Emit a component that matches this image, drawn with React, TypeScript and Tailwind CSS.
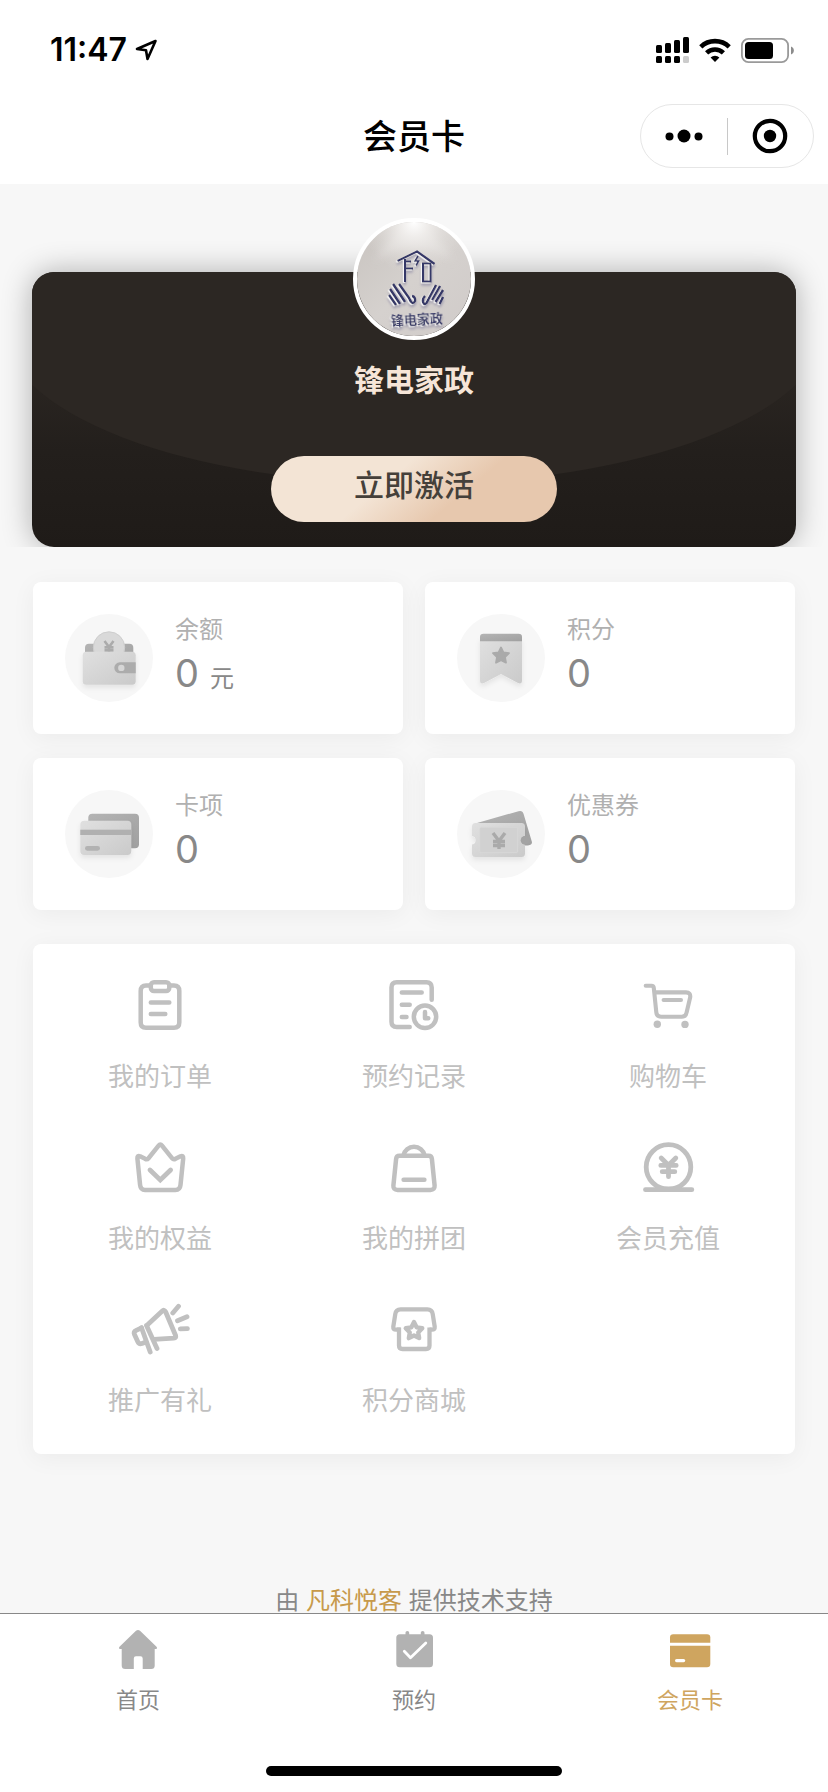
import React from "react";

type IconProps = { className?: string };

function YenStrokes({ x, y, s, color }: { x: number; y: number; s: number; color: string }) {
  return (
    <g transform={`translate(${x} ${y}) scale(${s})`} stroke={color} strokeWidth="3.4" fill="none">
      <path d="M-6 -8 L0 0 L6 -8 M0 -1 V8 M-6 0.5 H6 M-6 4.5 H6" />
    </g>
  );
}

/* ---------- status bar ---------- */

function LocationArrow() {
  return (
    <svg viewBox="0 0 24 24" className="size-6" fill="none" stroke="black" strokeWidth="2.6" strokeLinejoin="round" aria-hidden="true">
      <path d="M21.5 3 L3 11 L12 12.200 L13.500 21 Z" />
    </svg>
  );
}

function Signal() {
  return (
    <svg viewBox="0 0 33 26" className="h-[26px] w-[33px]" aria-hidden="true">
      <rect x="0" y="8" width="6" height="8" rx="1.5" />
      <rect x="9" y="6" width="6" height="10" rx="1.5" />
      <rect x="18" y="3" width="6" height="13" rx="1.5" />
      <rect x="27" y="0" width="6" height="16" rx="1.5" />
      <rect x="0" y="19" width="6" height="7" rx="1.5" />
      <rect x="9" y="19" width="6" height="7" rx="1.5" />
      <rect x="18" y="19" width="6" height="7" rx="1.5" />
      <rect x="27" y="19" width="6" height="7" rx="1.5" fill="#cccccc" />
    </svg>
  );
}

function Wifi() {
  return (
    <svg viewBox="0 0 32 24" className="h-6 w-8" fill="none" stroke="black" strokeWidth="4.6" aria-hidden="true">
      <path d="M1.800 8.800 A20.500 20.500 0 0 1 30.200 8.800" />
      <path d="M7.600 14.900 A12.200 12.200 0 0 1 24.400 14.900" />
      <path d="M16 24 L11.600 19.500 A6.400 6.400 0 0 1 20.400 19.500 Z" fill="black" stroke="none" />
    </svg>
  );
}

function Battery() {
  return (
    <svg viewBox="0 0 53 25" className="h-[25px] w-[53px]" aria-hidden="true">
      <rect x="0.900" y="0.900" width="46.200" height="23.200" rx="6.500" fill="none" stroke="#9a9a9a" strokeWidth="1.800" />
      <rect x="4" y="4" width="28" height="17" rx="3.500" />
      <path d="M50 8.500 C53.800 9.800 53.800 15.200 50 16.500 Z" fill="#8c8c8c" />
    </svg>
  );
}

/* ---------- avatar ---------- */

function AvatarPicture() {
  const ink = "#343768";
  return (
    <svg viewBox="0 0 114 114" className="size-full" role="img" aria-label="锋电家政">
      <defs>
        <linearGradient id="wall" x1="0" y1="0" x2="1" y2="1">
          <stop offset="0" stopColor="#c8c3bf" />
          <stop offset="0.500" stopColor="#d5d1ce" />
          <stop offset="1" stopColor="#d0cbc9" />
        </linearGradient>
        <radialGradient id="lamp" cx="0.500" cy="0" r="0.450">
          <stop offset="0" stopColor="#ffffff" />
          <stop offset="0.300" stopColor="#f3f1ef" stopOpacity="0.800" />
          <stop offset="1" stopColor="#e5e2df" stopOpacity="0" />
        </radialGradient>
        <filter id="haze" x="-20%" y="-20%" width="140%" height="140%">
          <feGaussianBlur stdDeviation="4" />
        </filter>
        <filter id="relief" x="-20%" y="-20%" width="140%" height="140%">
          <feDropShadow dx="-1.200" dy="0.800" stdDeviation="0.300" floodColor="#ffffff" floodOpacity="0.850" />
          <feDropShadow dx="0.300" dy="2.500" stdDeviation="1" floodColor="#8e8aa5" floodOpacity="0.700" />
        </filter>
      </defs>
      <rect width="114" height="114" fill="url(#wall)" />
      <path d="M48 0 L16 40 Q57 10 98 40 L66 0 Z" fill="#ebe8e6" opacity="0.500" filter="url(#haze)" />
      <rect width="114" height="114" fill="url(#lamp)" />
      <g fill="none" stroke={ink} filter="url(#relief)">
        <path d="M40.500 39 L60 29.500 L77.500 42" strokeWidth="2.200" />
        <path d="M48 37 V60 M48 39.500 H54 M48 46.500 H56" strokeWidth="2" />
        <rect x="66" y="41.500" width="7.500" height="18" strokeWidth="2" />
        <path d="M61 34 L58 39 H61.500 L59 43.500" strokeWidth="1.600" />
        <g strokeWidth="2.400">
          <path d="M32 73 L39 83 M33 67 L43 82 M36 62 L48 80 M42 62 L52 76 Q55 84 58 79 Q58.500 75 55 74" />
          <path d="M86 75 L82.500 82 M86 68 L78.500 80 M83 64 L75 78 M79 63 L71 78 Q68 85 66 80 Q65 77 68 74" />
        </g>
      </g>
      <text
        x="60"
        y="102"
        textAnchor="middle"
        transform="rotate(-3 60 102)"
        fontSize="13"
        fontWeight="700"
        fill={ink}
        filter="url(#relief)"
      >
        锋电家政
      </text>
    </svg>
  );
}

/* ---------- summary icons ---------- */

function SoftDefs({ id }: { id: string }) {
  return (
    <defs>
      <linearGradient id={`${id}-light`} x1="0" y1="0" x2="1" y2="1">
        <stop offset="0" stopColor="#e0e0e0" />
        <stop offset="1" stopColor="#cacaca" />
      </linearGradient>
      <linearGradient id={`${id}-dark`} x1="0" y1="0" x2="1" y2="1">
        <stop offset="0" stopColor="#b4b4b4" />
        <stop offset="1" stopColor="#a0a0a0" />
      </linearGradient>
      <filter id={`${id}-shadow`} x="-30%" y="-30%" width="160%" height="170%">
        <feDropShadow dx="0" dy="3" stdDeviation="2.500" floodColor="#000000" floodOpacity="0.080" />
      </filter>
    </defs>
  );
}

function WalletIcon() {
  return (
    <svg viewBox="0 0 88 88" className="size-full" aria-hidden="true">
      <SoftDefs id="wallet" />
      <rect x="20" y="29.700" width="48.300" height="20" rx="4" fill="url(#wallet-dark)" />
      <circle cx="44" cy="33.500" r="15.700" fill="#d9d9d9" stroke="#cecece" strokeWidth="1" />
      <YenStrokes x={44} y={33} s={0.75} color="#ababab" />
      <rect x="17.700" y="37.700" width="53" height="33" rx="3.500" fill="url(#wallet-light)" filter="url(#wallet-shadow)" />
      <path d="M70.700 48.300 H54.800 A5.500 5.500 0 0 0 54.800 59.300 H70.700 Z" fill="#acacac" />
      <circle cx="56.300" cy="53.900" r="3.200" fill="#d6d6d6" />
    </svg>
  );
}

function RibbonIcon() {
  return (
    <svg viewBox="0 0 88 88" className="size-full" aria-hidden="true">
      <SoftDefs id="ribbon" />
      <path
        d="M23 24 H65 V66.500 Q65 70.500 61 69 L44 60 L27 69 Q23 70.500 23 66.500 Z"
        fill="url(#ribbon-light)"
        filter="url(#ribbon-shadow)"
      />
      <path d="M23 27.300 V23 Q23 19.700 26.500 19.700 H61.500 Q65 19.700 65 23 V27.300 Z" fill="url(#ribbon-dark)" />
      <path
        d="M44 33.500 L46.400 38.500 L52 39.200 L48 43.200 L49 48.700 L44 46.100 L39 48.700 L40 43.200 L36 39.200 L41.600 38.500 Z"
        fill="#aaaaaa"
        stroke="#aaaaaa"
        strokeWidth="1.800"
        strokeLinejoin="round"
      />
    </svg>
  );
}

function CardsIcon() {
  return (
    <svg viewBox="0 0 88 88" className="size-full" aria-hidden="true">
      <SoftDefs id="cards" />
      <rect x="23.300" y="23.700" width="50.700" height="34.600" rx="4" fill="url(#cards-dark)" />
      <rect x="15.300" y="30.700" width="51" height="34.300" rx="4" fill="url(#cards-light)" filter="url(#cards-shadow)" />
      <rect x="15.300" y="39.700" width="51" height="5.300" fill="#b0b0b0" />
      <rect x="20" y="56" width="15" height="4.700" rx="2.350" fill="#b2b2b2" />
    </svg>
  );
}

function CouponIcon() {
  return (
    <svg viewBox="0 0 88 88" className="size-full" aria-hidden="true">
      <SoftDefs id="coupon" />
      <path
        d="M20 33 L61.500 21.200 Q65.500 20 66.600 24 L74.800 51.500 Q75.800 55 71 55.600 H64 V33 Z"
        fill="url(#coupon-dark)"
      />
      <path
        d="M18.500 33 H64.500 Q68 33 68 36.500 V46 A4.300 4.300 0 0 0 68 54.500 V63.500 Q68 67 64.500 67 H18.500 Q15 67 15 63.500 V54.500 A4.300 4.300 0 0 0 15 46 V36.500 Q15 33 18.500 33 Z"
        fill="url(#coupon-light)"
        filter="url(#coupon-shadow)"
      />
      <circle cx="68" cy="50.200" r="4.300" fill="#a3a3a3" />
      <rect x="22.700" y="37.300" width="38" height="25.400" rx="1.500" fill="#d1d1d1" stroke="#dadada" strokeWidth="0.700" />
      <YenStrokes x={42} y={51} s={1} color="#aaaaaa" />
    </svg>
  );
}

/* ---------- menu icons ---------- */

function LineIcon({ children, width = 4.5 }: { children: React.ReactNode; width?: number }) {
  return (
    <svg
      viewBox="0 0 60 60"
      className="size-[60px]"
      fill="none"
      stroke="#c0c0c0"
      strokeWidth={width}
      strokeLinecap="round"
      strokeLinejoin="round"
      aria-hidden="true"
    >
      {children}
    </svg>
  );
}

const OrdersIcon = () => (
  <LineIcon>
    <path d="M20 10.500 H16 Q10.700 10.500 10.700 16 V47.500 Q10.700 52.800 16 52.800 H44 Q49.300 52.800 49.300 47.500 V16 Q49.300 10.500 44 10.500 H40" />
    <rect x="20.800" y="7.200" width="18.500" height="8.800" rx="3.200" />
    <path d="M20.800 27.400 H39.300 M20.800 39.100 H35.300" />
  </LineIcon>
);

const RecordsIcon = () => (
  <LineIcon>
    <path d="M47.700 24.700 V12.500 Q47.700 7.200 42.500 7.200 H12.700 Q7.500 7.200 7.500 12.500 V46.700 Q7.500 52 12.700 52 H25.700" />
    <path d="M17.800 17.400 H37.700 M17.800 29.700 H25.700 M17.800 42 H22.500" />
    <circle cx="41" cy="41.800" r="11.200" />
    <path d="M41 37 V43.300 H44.300" />
  </LineIcon>
);

const CartIcon = () => (
  <LineIcon width={4.1}>
    <path d="M7.700 10.800 H13.500 Q15.600 10.800 15.800 13 L18.300 37.200 Q18.800 41.700 23.300 41.700 H43.800 Q48 41.700 48.600 37.500 L52.200 22.200 Q52.800 17.400 48 17.400 H17" />
    <path d="M25.600 25 H43" />
    <circle cx="19.300" cy="49.200" r="3.700" fill="#c0c0c0" stroke="none" />
    <circle cx="47" cy="49.400" r="3.700" fill="#c0c0c0" stroke="none" />
  </LineIcon>
);

const CrownIcon = () => (
  <LineIcon>
    <path d="M28.600 8.700 Q30.300 6.500 32 8.700 L42 21.200 Q43.500 23 45.500 21.800 L50.500 19.300 Q53.500 18.300 53.200 21.500 L50.500 48 Q50 52.900 45.500 52.900 H15 Q10.600 52.900 10.100 48 L7.400 21.500 Q7.100 18.300 10.100 19.300 L15.100 21.800 Q17 23 18.500 21.200 Z" />
    <path d="M20 33 L30.300 43 L40.600 33" strokeLinejoin="miter" strokeWidth="4.800" />
  </LineIcon>
);

const BagIcon = () => (
  <LineIcon>
    <path d="M15.500 18.700 H44.500 Q47.600 18.700 47.900 22 L50.600 48.500 Q50.900 52.900 46.500 52.900 H13.500 Q9.100 52.900 9.400 48.500 L12.100 22 Q12.400 18.700 15.500 18.700 Z" />
    <path d="M19.400 18.500 A10.800 10.800 0 0 1 40.600 18.500 M19.600 42.700 H40.400" />
  </LineIcon>
);

const RechargeIcon = () => (
  <LineIcon width={4.8}>
    <circle cx="30.500" cy="30" r="22.300" />
    <path d="M7.500 52.700 H53.800" />
    <path d="M20 51.500 H41" strokeWidth="4" />
    <path d="M23.200 21 L30.500 28.300 L37.800 21 M22.800 28.400 H38.200 M24.200 34.700 H36.800 M30.500 28 V39.700" />
  </LineIcon>
);

const MegaphoneIcon = () => (
  <LineIcon width={4.8}>
    <path d="M16.500 26.500 L27 49.500" />
    <path d="M17.800 25.500 L32 12.200 Q34.300 10 35.600 12.800 L45.600 36.500 Q46.400 39 43.800 39.200 L24 40.400" />
    <path d="M11.500 28.800 L20.200 53" />
    <path d="M11.500 28.800 L6.200 31.300 Q3.300 32.700 4.500 35.500 L7.800 42.700 Q9 45.400 12 44.500 L16 43" />
    <path d="M48.500 7.300 L42.800 14 M57 17.800 L47.500 21.800 M57.400 29.600 L50.300 29.900" />
  </LineIcon>
);

const ShopIcon = () => (
  <LineIcon width={4.3}>
    <path d="M16.500 30.700 H12 Q9 30.700 9.300 27.700 L11.300 15 Q12 10.300 16.500 10.300 H43.500 Q48 10.300 48.700 15 L50.700 27.700 Q51 30.700 48 30.700 H45.500" strokeLinecap="butt" />
    <path d="M15 28.500 V46.500 Q15 50 18.500 50 H42 Q45.500 50 45.500 46.500 V28.500" strokeLinecap="butt" />
    <path d="M30 23 L32.600 28.300 L38.300 29.200 L34.200 33.400 L35.200 39.200 L30 36.500 L24.800 39.200 L25.800 33.400 L21.700 29.200 L27.400 28.300 Z" />
  </LineIcon>
);

/* ---------- tab icons ---------- */

const HomeIcon = ({ className }: IconProps) => (
  <svg viewBox="0 0 44 44" className={className} fill="currentColor" aria-hidden="true">
    <path d="M20 2.800 Q22 1.200 24 2.800 L40.500 18.700 Q42 20.700 39.800 20.900 H38.700 V37.500 Q38.700 41 35.200 41 H26.700 V30.500 Q26.700 28.300 24.500 28.300 H20 Q17.800 28.300 17.800 30.500 V41 H9.200 Q5.700 41 5.700 37.500 V20.900 H4.200 Q2 20.700 3.500 18.700 Z" />
  </svg>
);

const BookingIcon = ({ className }: IconProps) => (
  <svg viewBox="0 0 44 44" className={className} fill="currentColor" aria-hidden="true">
    <rect x="4.300" y="6.300" width="36.700" height="33" rx="3.500" />
    <rect x="13.500" y="3" width="3.700" height="7" rx="1.800" />
    <rect x="28.800" y="3" width="3.700" height="7" rx="1.800" />
    <path d="M12.300 23.200 L18.500 29.800 L33.800 15" fill="none" stroke="white" strokeWidth="2.800" strokeLinecap="round" strokeLinejoin="round" />
  </svg>
);

const MemberIcon = ({ className }: IconProps) => (
  <svg viewBox="0 0 44 44" className={className} fill="currentColor" aria-hidden="true">
    <path d="M2 14.700 V9.500 Q2 6.300 5.200 6.300 H39 Q42.300 6.300 42.300 9.500 V14.700 Z" />
    <path d="M2 17.800 H42.300 V36 Q42.300 39.300 39 39.300 H5.200 Q2 39.300 2 36 Z" />
    <rect x="7" y="31" width="10.200" height="3.200" rx="1.600" fill="white" />
  </svg>
);

/* ---------- data ---------- */

const stats = [
  { label: "余额", value: "0", unit: "元", Icon: WalletIcon },
  { label: "积分", value: "0", Icon: RibbonIcon },
  { label: "卡项", value: "0", Icon: CardsIcon },
  { label: "优惠券", value: "0", Icon: CouponIcon },
];

const menu = [
  { label: "我的订单", Icon: OrdersIcon },
  { label: "预约记录", Icon: RecordsIcon },
  { label: "购物车", Icon: CartIcon },
  { label: "我的权益", Icon: CrownIcon },
  { label: "我的拼团", Icon: BagIcon },
  { label: "会员充值", Icon: RechargeIcon },
  { label: "推广有礼", Icon: MegaphoneIcon },
  { label: "积分商城", Icon: ShopIcon },
];

const tabs = [
  { label: "首页", Icon: HomeIcon, active: false },
  { label: "预约", Icon: BookingIcon, active: false },
  { label: "会员卡", Icon: MemberIcon, active: true },
];

export default function App() {
  return (
    <div className="flex min-h-screen flex-col bg-[#f7f7f7] font-['Inter','Noto_Sans_CJK_SC',sans-serif]">
      <header className="bg-white">
        <div className="flex h-[88px] items-center justify-between pt-3 pr-[34px] pl-[50px]">
          <div className="flex items-center gap-[7px]">
            <span className="text-[32px] leading-10 font-semibold text-black">11:47</span>
            <LocationArrow />
          </div>
          <div className="flex items-center gap-2.5">
            <Signal />
            <Wifi />
            <Battery />
          </div>
        </div>
        <div className="grid h-24 grid-cols-[1fr_auto_1fr] items-center px-3.5">
          <h1 className="col-start-2 pt-0.5 text-[34px] leading-[48px] font-medium text-black">会员卡</h1>
          <div className="flex h-16 w-[174px] items-center justify-self-end rounded-full border border-[#e6e6e6]">
            <button type="button" aria-label="更多" className="flex h-full flex-1 items-center justify-center">
              <svg viewBox="0 0 38 14" className="h-3.5 w-[38px]" aria-hidden="true">
                <circle cx="4.500" cy="7.500" r="4" />
                <circle cx="19" cy="7" r="6.500" />
                <circle cx="33.500" cy="7.500" r="4" />
              </svg>
            </button>
            <span className="h-[37px] w-px bg-[#c8c8c8]" />
            <button type="button" aria-label="关闭" className="flex h-full flex-1 items-center justify-center">
              <svg viewBox="0 0 36 36" className="size-9" aria-hidden="true">
                <circle cx="18" cy="18" r="15.200" fill="none" stroke="black" strokeWidth="4.200" />
                <circle cx="18" cy="18" r="6.200" />
              </svg>
            </button>
          </div>
        </div>
      </header>

      <main className="flex flex-1 flex-col">
        <section className="overflow-hidden px-8 pt-[88px]">
          <div className="relative flex flex-col items-center rounded-[22px] pb-[25px] shadow-[0_0_30px_rgba(0,0,0,0.3)]">
            <div className="absolute inset-0 overflow-hidden rounded-[22px] bg-linear-to-b from-[#2b2622] from-35% via-[#231f1c] via-65% to-[#1f1b18]">
              <div className="absolute -top-[108px] -left-[4%] h-80 w-[108%] rounded-[50%] bg-[#2c2723]" />
            </div>
            <div className="relative -mt-[54px] size-[122px] overflow-hidden rounded-full border-4 border-white">
              <AvatarPicture />
            </div>
            <h2 className="relative mt-5 text-[30px] leading-10 font-semibold text-[#f6e5d8]">锋电家政</h2>
            <button
              type="button"
              className="relative mt-14 h-[66px] w-[286px] rounded-full bg-linear-[140deg] from-[#f3e4d5] from-40% to-[#e7c8ae] to-65% pb-2 text-[30px] leading-10 font-medium text-[#45403a]"
            >
              立即激活
            </button>
          </div>
        </section>

        <section className="grid grid-cols-2 gap-x-[22px] gap-y-6 px-[33px] pt-[35px]">
          {stats.map(({ label, value, unit, Icon }) => (
            <a
              key={label}
              href="#"
              className="flex h-[152px] gap-[22px] rounded-lg bg-white p-8 shadow-[0_4px_24px_rgba(0,0,0,0.05)]"
            >
              <span className="size-[88px] shrink-0 rounded-full bg-[#f7f7f7]">
                <Icon />
              </span>
              <span className="flex flex-col">
                <span className="text-2xl leading-8 text-[#b0b0b0]">{label}</span>
                <span className="mt-1 flex items-baseline gap-[11px] text-[38px] leading-[46px] text-[#888888]">
                  {value}
                  {unit && <span className="text-2xl leading-8">{unit}</span>}
                </span>
              </span>
            </a>
          ))}
        </section>

        <section className="mx-[33px] mt-[34px] grid grid-cols-3 rounded-lg bg-white py-3 shadow-[0_4px_24px_rgba(0,0,0,0.05)]">
          {menu.map(({ label, Icon }) => (
            <a key={label} href="#" className="flex h-[162px] flex-col items-center pt-[19px]">
              <Icon />
              <span className="mt-[22px] text-[26px] leading-10 text-[#c0c0c0]">{label}</span>
            </a>
          ))}
        </section>

        <p className="mt-auto pt-8 text-center text-2xl leading-6 text-[#888888]">
          由{" "}
          <a href="#" className="text-[#c79a4b]">
            凡科悦客
          </a>{" "}
          提供技术支持
        </p>
      </main>

      <nav className="border-t border-[#888888] bg-white">
        <div className="grid grid-cols-3 pt-3.5">
          {tabs.map(({ label, Icon, active }) => (
            <a
              key={label}
              href="#"
              aria-current={active ? "page" : undefined}
              className={`flex flex-col items-center gap-3 ${active ? "text-[#cfa55f]" : "text-[#888888]"}`}
            >
              <Icon className={active ? "size-11" : "size-11 text-[#b2b2b2]"} />
              <span className="text-[22px] leading-8">{label}</span>
            </a>
          ))}
        </div>
        <div className="mx-auto mt-[50px] mb-4 h-2.5 w-[296px] rounded-full bg-black" />
      </nav>
    </div>
  );
}
